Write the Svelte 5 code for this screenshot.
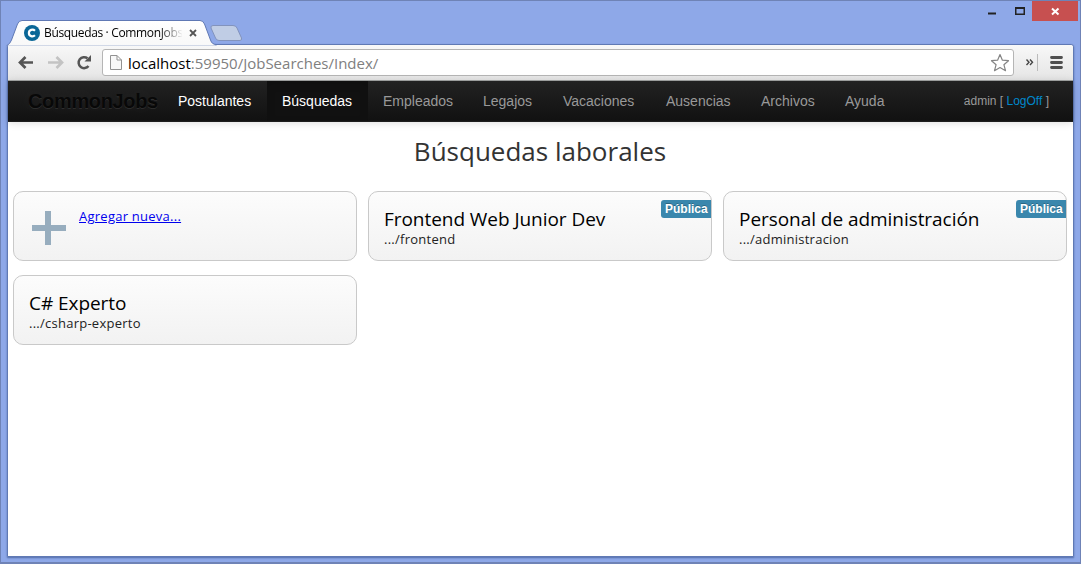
<script>
  const nav = [
    { label: 'Postulantes', kind: 'bright', w: 104 },
    { label: 'Búsquedas', kind: 'active', w: 101 },
    { label: 'Empleados', kind: '', w: 100 },
    { label: 'Legajos', kind: '', w: 80 },
    { label: 'Vacaciones', kind: '', w: 103 },
    { label: 'Ausencias', kind: '', w: 95 },
    { label: 'Archivos', kind: '', w: 84 },
    { label: 'Ayuda', kind: '', w: 71 }
  ];
  const jobs = [
    { title: 'Frontend Web Junior Dev', url: '.../frontend', open: true, ts: -0.05, us: 0.25 },
    { title: 'Personal de administración', url: '.../administracion', open: true, ts: -0.05, us: 0.25 },
    { title: 'C# Experto', url: '.../csharp-experto', open: false, ts: -0.05, us: 0.25 }
  ];
</script>

<div class="window">
  <header class="titlebar">
    <svg class="tabs" width="260" height="46" viewBox="0 0 260 46">
      <defs>
        <linearGradient id="tab" x1="0" y1="0" x2="0" y2="1">
          <stop offset="0" stop-color="#ffffff" /><stop offset="1" stop-color="#f8f8f8" />
        </linearGradient>
      </defs>
      <path d="M7 45.5 Q10 44 11.5 40 L17.5 24 Q19 20.5 22 20.5 H200 Q203 20.5 204.500 24 L210.500 40 Q212 44.500 216 44.500 V46 H7Z" fill="url(#tab)" stroke="#5f78b4" />
      <path d="M8 46 V45.500 H218 V46Z" fill="#f8f8f8" />
      <path d="M213 25.500 H233 Q236 25.500 237 28 L241.500 38 Q242 40.500 240 40.500 H219 Q216.500 40.500 215.500 38 L211 28 Q210.500 25.500 213 25.500Z" fill="#c0cde5" stroke="#8293bd" />
      <circle cx="32" cy="33" r="8" fill="#0a6797" />
      <path d="M35 30.700 C32.800 28.700 28.900 29.700 28.900 33 C28.900 36.300 32.800 37.300 35 35.300" fill="none" stroke="#fff" stroke-width="2.200" />
      <path d="M190 30 L196 36 M196 30 L190 36" stroke="#555" stroke-width="1.800" />
    </svg>
    <span class="tab-title">Búsquedas · CommonJobs</span>
    <svg class="controls" width="100" height="21" viewBox="0 0 100 21">
      <path d="M7 13.500 H15" stroke="#222" stroke-width="2" />
      <path d="M34 7 H44 V15 H34Z M35.500 9 V13.500 H42.500 V9Z" fill="#222" fill-rule="evenodd" />
      <rect x="51" y="1" width="46" height="20" fill="#c75050" />
      <path d="M71 8.500 L77.500 14.500 M77.500 8.500 L71 14.500" stroke="#fff" stroke-width="2" />
    </svg>
  </header>

  <div class="frame">
    <div class="toolbar">
      <svg class="history" width="94" height="35" viewBox="0 0 94 35">
        <path d="M17.500 12 L12 17.500 L17.500 23 M12 17.500 H25" fill="none" stroke="#555" stroke-width="2.700" />
        <path d="M48.500 12 L54 17.500 L48.500 23 M54 17.500 H40" fill="none" stroke="#c3c3c3" stroke-width="2.700" />
        <path d="M80.500 21 A5.500 5.500 0 1 1 79.500 13.300" fill="none" stroke="#555" stroke-width="2.500" />
        <path d="M83 10 V16.500 H76.500Z" fill="#555" />
      </svg>
      <div class="omnibox">
        <svg width="14" height="18" viewBox="0 0 14 18">
          <path d="M1.500 1.500 H8 L12.500 6 V15.500 H1.500Z M8 1.500 V6 H12.500" fill="#f8f8f8" stroke="#929292" stroke-linejoin="round" />
        </svg>
        <div class="url"><b>localhost</b>:59950/JobSearches/Index/</div>
        <svg class="star" width="20" height="20" viewBox="0 0 20 20">
          <path d="M10 1.500 L12.400 7.200 L18.500 7.700 L13.900 11.700 L15.500 17.700 L10 14.500 L4.500 17.700 L6.100 11.700 L1.500 7.700 L7.600 7.200Z" fill="#fff" stroke="#858585" stroke-width="1.200" stroke-linejoin="round" />
        </svg>
      </div>
      <svg class="menu" width="59" height="35" viewBox="0 0 59 35">
        <path d="M12.500 14.500 L15 17.300 L12.500 20 M16 14.500 L18.500 17.300 L16 20" fill="none" stroke="#444" stroke-width="1.400" />
        <path d="M23.500 9 V26" stroke="#bbb" />
        <path d="M37.500 12.500 H47.500 M37.500 17.500 H47.500 M37.500 22.500 H47.500" stroke="#505050" stroke-width="2.800" stroke-linecap="round" />
      </svg>
    </div>

    <nav>
      <div class="brand">CommonJobs</div>
      {#each nav as item}
        <div class="item {item.kind}" style="width:{item.w}px">{item.label}</div>
      {/each}
      <div class="user">admin [ <span>LogOff</span> ]</div>
    </nav>

    <main>
      <h1>Búsquedas laborales</h1>
      <div class="grid">
        <section class="card add">
          <svg width="36" height="36" viewBox="0 0 36 36"><path d="M1 15 H14 V1 H20 V15 H35 V21 H20 V35 H14 V21 H1Z" fill="#97adbe" /></svg>
          <span class="link">Agregar nueva...</span>
        </section>
        {#each jobs as job}
          <section class="card">
            <h2><span style="letter-spacing:{job.ts}px">{job.title}</span></h2>
            <p><span style="letter-spacing:{job.us}px">{job.url}</span></p>
            {#if job.open}<span class="badge">Pública</span>{/if}
          </section>
        {/each}
      </div>
    </main>
  </div>
</div>

<style>
  * { box-sizing: border-box; }
  .window { width: 1081px; height: 564px; border: 1px solid #6f83b6; border-bottom-width: 2px; background: #8ea8e8; padding: 0 6px 6px; overflow: hidden; }
  .titlebar { position: relative; height: 43px; margin: 0 -6px; }
  .tabs { position: absolute; z-index: 2; left: -1px; top: -1px; }
  .tab-title { position: absolute; z-index: 3; left: 43px; top: 23px; width: 138px; overflow: hidden; white-space: nowrap; font: 12px/18px "Open Sans", sans-serif; letter-spacing: -0.35px; color: #000; -webkit-mask-image: linear-gradient(90deg, #000 115px, transparent 139px); mask-image: linear-gradient(90deg, #000 115px, transparent 139px); }
  .controls { position: absolute; right: -1px; top: -1px; }
  .frame { height: 513px; border: 1px solid #6079b4; border-radius: 3px 3px 0 0; background: #fff; display: flex; flex-direction: column; box-shadow: 0 1px 2px #526ca8; }
  .toolbar { height: 36px; flex: none; display: flex; background: linear-gradient(#f8f8f8, #e5e5e5); border-bottom: 1px solid #a4a6a5; border-radius: 3px 3px 0 0; }
  .history { flex: none; }
  .omnibox { width: 912px; height: 27px; margin-top: 4px; border: 1px solid #b5b5b5; border-radius: 3px; background: #fff; display: flex; align-items: center; padding: 0 3px 0 6px; }
  .url { flex: 1; margin-left: 5px; font: 15px/24px "Open Sans", sans-serif; color: #808080; white-space: nowrap; }
  .url b { font-weight: 400; color: #000; }
  nav { height: 41px; flex: none; display: flex; background: linear-gradient(#222, #111); font: 14px/40px "Liberation Sans", sans-serif; color: #999; box-shadow: 0 1px 8px rgba(0,0,0,.14); border-bottom: 1px solid #1c1c1c; }
  .brand { width: 155px; padding-left: 20px; font-size: 20px; font-weight: 700; color: #080808; letter-spacing: -.35px; text-shadow: 0 1px 0 rgba(255,255,255,.1), 0 0 20px rgba(255,255,255,.1); }
  .item { padding-left: 15px; white-space: nowrap; }
  .bright { color: #fff; }
  .active { color: #fff; background: #111; box-shadow: inset 0 3px 8px rgba(0,0,0,.125); }
  .user { margin-left: auto; margin-right: 24px; font-size: 12px; }
  .user span { color: #0088cc; }
  main { padding: 0 6px 0 5px; font-family: "Open Sans", sans-serif; }
  h1 { margin: 9px 0 0; height: 60px; text-align: center; font-size: 26px; line-height: 40px; font-weight: 400; color: #333; }
  .grid { display: grid; grid-template-columns: repeat(3, 344px); gap: 14px 11px; }
  .card { position: relative; height: 70px; padding: 16px 15px; border: 1px solid #c9c9c9; border-radius: 10px; background: linear-gradient(#fcfcfc, #f2f2f2); white-space: nowrap; }
  h2 { margin: 0; font-size: 19px; line-height: 22px; font-weight: 400; color: #000; }
  p { margin: 0; font-size: 13px; line-height: 18px; color: #222; }
  .badge { position: absolute; right: 0; top: 8px; width: 50px; height: 18px; padding-left: 4px; border-radius: 3px 0 0 3px; background: #3a87ad; color: #fff; font: bold 12px/18px "Liberation Sans", sans-serif; text-shadow: 0 -1px 0 rgba(0,0,0,.25); }
  .add { display: flex; padding: 18px 17px; }
  .add svg { flex: none; }
  .link { margin: -4px 0 0 12px; font-size: 13px; line-height: 20px; height: 20px; color: #00e; text-decoration: underline; letter-spacing: .25px; }
</style>
